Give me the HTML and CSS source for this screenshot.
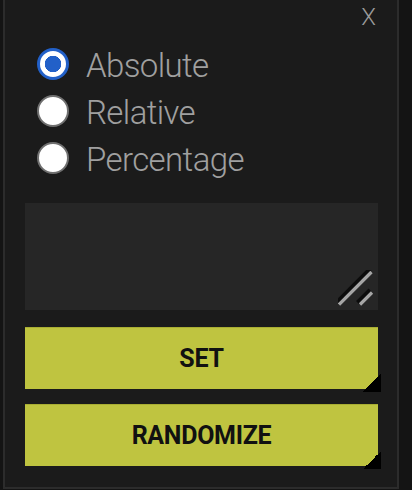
FILE: index.html
```html
<!DOCTYPE html>
<html>
<head>
<meta charset="utf-8">
<link rel="stylesheet" href="styles.css">
</head>
<body>
<div class="panel">
  <span class="close">X</span>
  <div class="options">
    <label class="option"><span class="radio checked"></span><span class="label">Absolute</span></label>
    <label class="option"><span class="radio"></span><span class="label">Relative</span></label>
    <label class="option"><span class="radio"></span><span class="label">Percentage</span></label>
  </div>
  <div class="field">
    <textarea class="input"></textarea>
    <svg class="grip" width="40" height="40" viewBox="0 0 40 40">
      <g stroke="#0c0c0c" stroke-width="4" fill="none">
        <line x1="-1.5" y1="32.5" x2="32" y2="-1"/>
        <line x1="19.5" y1="32.5" x2="32" y2="20"/>
      </g>
      <g stroke="#a6a6a6" stroke-width="3.2" fill="none">
        <line x1="1" y1="34.5" x2="33.5" y2="2"/>
        <line x1="22" y1="34.5" x2="34" y2="22.5"/>
      </g>
    </svg>
  </div>
  <button class="btn">SET</button>
  <button class="btn">RANDOMIZE</button>
</div>
</body>
</html>
```
FILE: styles.css
```css
html, body {
  margin: 0;
  padding: 0;
  background: #141414;
  width: 412px;
  height: 490px;
  overflow: hidden;
}
.panel {
  position: relative;
  box-sizing: border-box;
  margin-left: 3px;
  width: 396px;
  height: 489px;
  background: #1b1b1b;
  border: 2px solid #2c2c2c;
  border-top: none;
  padding: 40px 19px 0 20px;
  display: flex;
  flex-direction: column;
}
.close {
  position: absolute;
  top: 3px;
  right: 21px;
  font-family: Roboto, sans-serif;
  font-weight: 300;
  font-size: 24px;
  color: #9a9a9a;
}
.options {
  display: flex;
  flex-direction: column;
  padding-left: 12px;
}
.option {
  height: 47px;
  display: flex;
  align-items: center;
  gap: 17px;
}
.radio {
  box-sizing: border-box;
  width: 32px;
  height: 32px;
  border-radius: 50%;
  background: #fff;
  border: 2.5px solid #707070;
  flex: none;
}
.radio.checked {
  border: 3px solid #2260c8;
  background: radial-gradient(circle, #2260c8 0 8px, #fff 8.5px);
}
.label {
  font-family: Roboto, sans-serif;
  font-weight: 300;
  font-size: 33px;
  letter-spacing: -0.6px;
  color: #a0a0a0;
  line-height: 1;
  position: relative;
  top: 2px;
}
.field {
  position: relative;
  margin-top: 22px;
  height: 107px;
}
.input {
  box-sizing: border-box;
  display: block;
  width: 100%;
  height: 100%;
  margin: 0;
  border: none;
  outline: none;
  resize: none;
  background: #262626;
}
.grip {
  position: absolute;
  right: 0;
  bottom: 0;
}
.btn {
  position: relative;
  box-sizing: border-box;
  height: 62px;
  margin-top: 17px;
  border: none;
  border-top: 1px solid #a9ae33;
  background: #bfc440;
  font-family: Roboto, sans-serif;
  font-weight: 700;
  font-size: 25px;
  letter-spacing: -0.3px;
  color: #111;
  padding: 0;
}
.btn + .btn {
  margin-top: 15px;
}
.btn::after {
  content: "";
  position: absolute;
  right: -3px;
  bottom: -3px;
  width: 18px;
  height: 18px;
  background: linear-gradient(to top left, #000 50%, transparent 50%);
}
```
